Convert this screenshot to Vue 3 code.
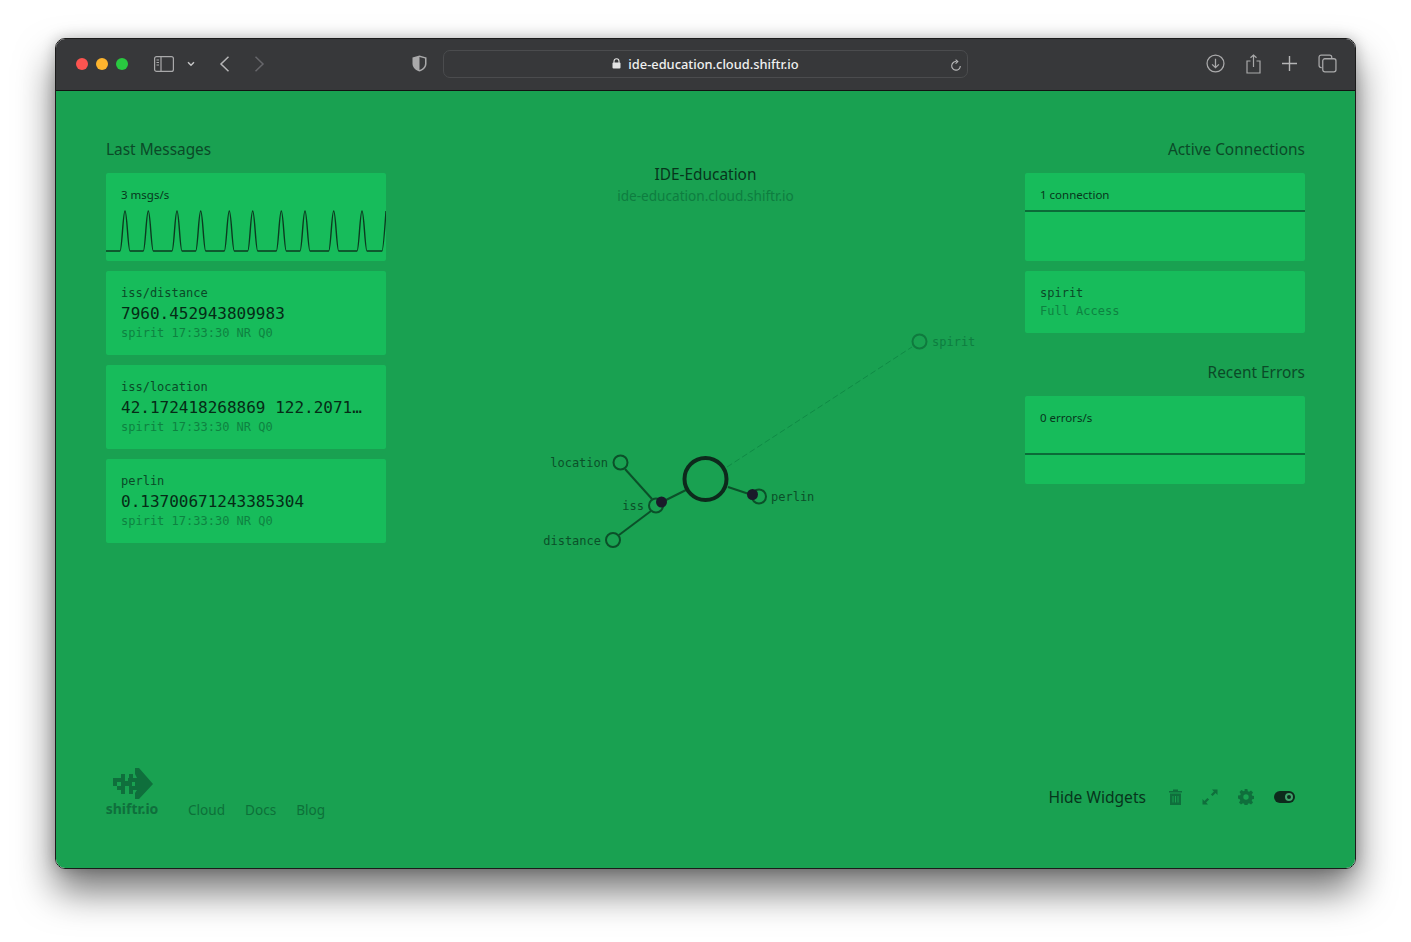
<script setup>
import { computed } from 'vue'

const messages = [
  { topic: 'iss/distance', value: '7960.452943809983', meta: 'spirit 17:33:30 NR Q0' },
  { topic: 'iss/location', value: '42.172418268869 122.2071…', meta: 'spirit 17:33:30 NR Q0' },
  { topic: 'perlin', value: '0.13700671243385304', meta: 'spirit 17:33:30 NR Q0' },
]

const peaks = [19, 42.3, 71, 94.7, 123.3, 146.7, 175.3, 199, 227.7, 256]

// spark line for the msgs/s card
const sparkPath = computed(() => {
  let d = 'M0 38'
  for (const x of peaks) {
    d += ` L${x - 5} 38 C${x - 3} 38 ${x - 2} -2 ${x} -2 C${x + 2} -2 ${x + 3} 38 ${x + 5} 38`
  }
  d += ' L276 38 C277 38 278.5 20 280 -2'
  return d
})
</script>

<template>
  <main class="page">
    <div class="window">
      <header class="toolbar">
        <div class="lights">
          <span class="light red"></span>
          <span class="light yellow"></span>
          <span class="light green"></span>
        </div>
        <svg class="tb-icon sidebar" width="20" height="16" viewBox="0 0 20 16" fill="none" stroke="#a9a9aa" stroke-width="1.2">
          <rect x="0.6" y="0.6" width="18.8" height="14.8" rx="2" />
          <path d="M7 1v14M2.5 4h2.5M2.5 6.5h2.5M2.5 9h2.5" />
        </svg>
        <svg class="tb-icon chevron" width="8" height="6" viewBox="0 0 8 6" fill="none" stroke="#c4c4c5" stroke-width="1.5">
          <path d="M1 1.2l3 3 3-3" />
        </svg>
        <svg class="tb-icon back" width="11" height="16" viewBox="0 0 11 16" fill="none" stroke="#b5b5b6" stroke-width="1.5">
          <path d="M9.5 0.8L2 8l7.5 7.2" />
        </svg>
        <svg class="tb-icon forward" width="11" height="16" viewBox="0 0 11 16" fill="none" stroke="#66666a" stroke-width="1.5">
          <path d="M1.5 0.8L9 8l-7.5 7.2" />
        </svg>
        <svg class="tb-icon shield" width="15" height="17" viewBox="0 0 15 17">
          <path d="M7.5 0.5L14.5 2.5V8.5C14.5 12.5 11.5 15.2 7.5 16.5C3.5 15.2 0.5 12.5 0.5 8.5V2.5Z" fill="#a9a9aa" />
          <path d="M7.5 2L13 3.5V8.5C13 11.7 10.7 14 7.5 15Z" fill="#38393b" />
        </svg>
        <div class="urlbar">
          <svg class="lock" width="9" height="11" viewBox="0 0 9 11">
            <path d="M2 5V3.2a2.5 2.5 0 0 1 5 0V5" fill="none" stroke="#e4e4e4" stroke-width="1.1" />
            <rect x="0.5" y="4.6" width="8" height="6" rx="1" fill="#e4e4e4" />
          </svg>
          <span class="url">ide-education.cloud.shiftr.io</span>
          <svg class="reload" width="12" height="13" viewBox="0 0 12 13" fill="none" stroke="#b9b9ba" stroke-width="1.1">
            <path d="M6.5 2.6A4.3 4.3 0 1 0 10.3 7" />
            <path d="M5.6 0.6l2.2 2-2.2 2" />
          </svg>
        </div>
        <div class="tb-right">
          <svg width="19" height="19" viewBox="0 0 18 18" fill="none" stroke="#a9a9aa" stroke-width="1.2">
            <circle cx="9" cy="9" r="8" />
            <path d="M9 4.5v8.5M5.8 9.8L9 13l3.2-3.2" />
          </svg>
          <svg width="15" height="20" viewBox="0 0 15 20" fill="none" stroke="#a9a9aa" stroke-width="1.2">
            <path d="M4.5 7H1v12h13V7h-3.5M7.5 13V1M4.5 3.8L7.5 1l3 2.8" />
          </svg>
          <svg width="15" height="15" viewBox="0 0 14 14" fill="none" stroke="#b5b5b6" stroke-width="1.3">
            <path d="M7 0v14M0 7h14" />
          </svg>
          <svg width="19" height="19" viewBox="0 0 18 18" fill="none" stroke="#a9a9aa" stroke-width="1.2">
            <path d="M3.5 13H3a2 2 0 0 1-2-2V3a2 2 0 0 1 2-2h8a2 2 0 0 1 2 2v.8" />
            <rect x="4.5" y="4.5" width="12.5" height="12.5" rx="2" />
          </svg>
        </div>
      </header>

      <section class="content">
        <div class="columns">
          <aside class="col">
            <h2 class="col-title">Last Messages</h2>
            <div class="card rate-card">
              <p class="rate">3 msgs/s</p>
              <svg class="spark" width="280" height="42" viewBox="0 -3 280 42" fill="none" stroke="#0c3a20" stroke-width="1.4">
                <path :d="sparkPath" />
              </svg>
            </div>
            <div v-for="m in messages" :key="m.topic" class="card message">
              <p class="mono topic">{{ m.topic }}</p>
              <p class="mono value">{{ m.value }}</p>
              <p class="mono meta">{{ m.meta }}</p>
            </div>
          </aside>

          <div class="center">
            <h1 class="instance">IDE-Education</h1>
            <p class="host">ide-education.cloud.shiftr.io</p>
            <svg class="graph" viewBox="386 139 639 600" width="639" height="600">
              <line x1="727" y1="467" x2="912" y2="347" class="link-faint" />
              <line x1="625" y1="469" x2="652" y2="499" class="link" />
              <line x1="651" y1="511" x2="619" y2="535" class="link" />
              <line x1="662" y1="502" x2="686" y2="490" class="link" />
              <line x1="728" y1="487" x2="752" y2="495" class="link" />
              <circle cx="919.5" cy="341.5" r="7" class="node-faint" />
              <circle cx="620.5" cy="462.5" r="7" class="node" />
              <circle cx="656" cy="505.5" r="7" class="node" />
              <circle cx="613" cy="540" r="7" class="node" />
              <circle cx="759" cy="496.5" r="7" class="node" />
              <circle cx="705.5" cy="479" r="21" class="broker" />
              <circle cx="661.5" cy="502" r="5.5" class="dot" />
              <circle cx="752.5" cy="494.5" r="5.5" class="dot" />
              <text x="932" y="345.5" class="label faint">spirit</text>
              <text x="608" y="466.5" class="label" text-anchor="end">location</text>
              <text x="644" y="509.5" class="label" text-anchor="end">iss</text>
              <text x="601" y="544.5" class="label" text-anchor="end">distance</text>
              <text x="771" y="500.5" class="label">perlin</text>
            </svg>
          </div>

          <aside class="col right">
            <h2 class="col-title">Active Connections</h2>
            <div class="card split-card">
              <p class="rate">1 connection</p>
              <div class="split conn-split"></div>
            </div>
            <div class="card client">
              <p class="mono topic">spirit</p>
              <p class="mono access">Full Access</p>
            </div>
            <h2 class="col-title errors-title">Recent Errors</h2>
            <div class="card split-card">
              <p class="rate">0 errors/s</p>
              <div class="split err-split"></div>
            </div>
          </aside>
        </div>

        <footer class="footer">
          <div class="brand">
            <svg class="logo" width="40" height="32" viewBox="0 0 40 32" fill="#0f6f3c">
              <path d="M22 0h4l14 16-14 15h-4v-6l2-3V10l-2-4Z" />
              <path d="M8 6h4v4h4V6h4v4h4v12h-4v4h-4v-4h-4v4H8v-4H4v-4H0v-8h4v-0h4Z" />
              <g fill="#19a151">
                <rect x="4" y="14" width="4" height="4" />
                <rect x="12" y="10" width="3" height="3" />
                <rect x="12" y="18" width="4" height="4" />
                <rect x="19" y="14" width="3" height="4" />
              </g>
            </svg>
            <span class="brand-name">shiftr.io</span>
          </div>
          <nav class="links">
            <a>Cloud</a>
            <a>Docs</a>
            <a>Blog</a>
          </nav>
          <div class="actions">
            <span class="hide">Hide Widgets</span>
            <svg width="13" height="16" viewBox="0 0 13 16" fill="#0f6f3c">
              <path d="M0 2h4V0.5h5V2h4v1.6H0ZM1 4.6h11V16H1Z" />
              <path d="M4 7v6.5M6.5 7v6.5M9 7v6.5" stroke="#19a151" stroke-width="1" />
            </svg>
            <svg width="16" height="16" viewBox="0 0 16 16" fill="#0f6f3c">
              <path d="M10 0.5h5.5V6l-1.9-1.9-3 3-1.7-1.7 3-3ZM6 15.5H0.5V10l1.9 1.9 3-3 1.7 1.7-3 3Z" />
            </svg>
            <svg width="16" height="16" viewBox="0 0 16 16" fill="#0f6f3c">
              <path fill-rule="evenodd" d="M6.6 0h2.8l.4 2.2 1.3.6 1.9-1.3 2 2-1.3 1.9.6 1.3 2.2.4v2.8l-2.2.4-.6 1.3 1.3 1.9-2 2-1.9-1.3-1.3.6-.4 2.2H6.6l-.4-2.2-1.3-.6-1.9 1.3-2-2 1.3-1.9-.6-1.3L0 9.4V6.6l2.2-.4.6-1.3-1.3-1.9 2-2 1.9 1.3 1.3-.6ZM8 5.3a2.7 2.7 0 1 0 0 5.4 2.7 2.7 0 0 0 0-5.4Z" />
            </svg>
            <span class="toggle"><span class="knob"></span></span>
          </div>
        </footer>
      </section>
    </div>
  </main>
</template>

<style>
html, body {
  background: #fff;
}
</style>

<style scoped>
.page {
  width: 1411px;
  height: 942px;
  padding: 38px 55px 0;
  box-sizing: border-box;
  overflow: hidden;
  font-family: "Noto Sans", "Open Sans", sans-serif;
}

.window {
  width: 1301px;
  height: 831px;
  border: 1px solid #1b1b1b;
  border-radius: 10px;
  box-sizing: border-box;
  overflow: hidden;
  display: flex;
  flex-direction: column;
  box-shadow: 0 22px 38px rgba(0, 0, 0, 0.55), 0 0 14px rgba(0, 0, 0, 0.22);
}

.toolbar {
  height: 52px;
  flex: none;
  background: #37383a;
  border-bottom: 1px solid #121212;
  box-sizing: border-box;
  display: flex;
  align-items: center;
  padding: 0 0 2px 20px;
  color: #eee;
}

.lights {
  display: flex;
  gap: 8px;
}

.light {
  width: 12px;
  height: 12px;
  border-radius: 50%;
}

.red { background: #fc5450; }
.yellow { background: #fdb42e; }
.green { background: #29c840; }

.tb-icon { flex: none; }
.sidebar { margin-left: 26px; }
.chevron { margin-left: 13px; }
.back { margin-left: 24px; }
.forward { margin-left: 24px; }
.shield { margin-left: 147px; }

.urlbar {
  width: 525px;
  height: 28px;
  margin-left: 16px;
  border: 1px solid #4b4c4e;
  border-radius: 7px;
  box-sizing: border-box;
  position: relative;
  display: flex;
  align-items: center;
  justify-content: center;
  gap: 7px;
  font-size: 12.85px;
  font-weight: 500;
  color: #f0f0f0;
}

.reload {
  position: absolute;
  right: 5px;
  top: 8px;
}

.tb-right {
  display: flex;
  align-items: center;
  margin-left: 238px;
  gap: 21px;
}

.content {
  flex: 1;
  background: #19a151;
  padding: 48px 50px 0;
  display: flex;
  flex-direction: column;
}

.columns {
  flex: 1;
  display: flex;
  justify-content: space-between;
}

.col {
  width: 280px;
  display: flex;
  flex-direction: column;
  gap: 10px;
}

.col-title {
  margin: 0 0 2px;
  height: 22px;
  line-height: 22px;
  font-size: 15.4px;
  font-weight: 400;
  color: #0b4a28;
}

.right .col-title { text-align: right; }

.errors-title {
  margin-top: 19px;
}

.card {
  background: #17bc5b;
  border-radius: 2px;
  padding: 0 15px;
  box-sizing: border-box;
  position: relative;
}

p { margin: 0; }

.rate {
  padding-top: 13px;
  font-size: 11.5px;
  line-height: 17px;
  color: #07351c;
}

.rate-card {
  height: 88px;
}

.spark {
  position: absolute;
  left: 0;
  bottom: 9px;
}

.mono {
  font-family: "DejaVu Sans Mono", monospace;
  white-space: nowrap;
}

.message {
  height: 84px;
  padding-top: 13px;
}

.topic {
  font-size: 12px;
  line-height: 18px;
  color: #0a4a28;
}

.value {
  margin-top: 1px;
  font-size: 16px;
  line-height: 21px;
  color: #052b16;
}

.meta, .access {
  font-size: 12px;
  line-height: 18px;
  color: #0e8241;
}

.split-card {
  height: 88px;
}

.split {
  position: absolute;
  left: 0;
  right: 0;
  height: 2px;
  background: #0b6b38;
}

.conn-split { top: 37px; }
.err-split { top: 57px; }

.client {
  height: 62px;
  padding-top: 13px;
}

.center {
  flex: 1;
  text-align: center;
  padding-top: 25px;
  position: relative;
}

.instance {
  margin: 0;
  font-size: 15.4px;
  font-weight: 400;
  line-height: 21px;
  color: #07351c;
}

.host {
  font-size: 13.6px;
  line-height: 22px;
  color: #0e7d40;
}

.graph {
  position: absolute;
  left: 0;
  top: 0;
}

.link { stroke: #0b5029; stroke-width: 2; }
.link-faint { stroke: #0f8a45; stroke-width: 1; stroke-dasharray: 6 3; }
.node { fill: none; stroke: #0b5029; stroke-width: 2; }
.node-faint { fill: none; stroke: #0f7a3e; stroke-width: 2; }
.broker { fill: none; stroke: #0d2a1c; stroke-width: 4; }
.dot { fill: #1a1a2a; }

.label {
  font-family: "DejaVu Sans Mono", monospace;
  font-size: 12px;
  fill: #0b5029;
}

.label.faint { fill: #0e7d40; }

.footer {
  height: 72px;
  margin-bottom: 49px;
  display: flex;
  align-items: flex-end;
}

.brand {
  display: flex;
  flex-direction: column;
  align-items: center;
  width: 52px;
  padding-bottom: 1px;
}

.logo { margin-left: 2px; }

.brand-name {
  font-size: 14px;
  font-weight: 700;
  line-height: 18px;
  color: #0f6f3c;
}

.links {
  margin-left: 30px;
  display: flex;
  gap: 20px;
  font-size: 13.6px;
  line-height: 18px;
  color: #0d7039;
}

.actions {
  margin-left: auto;
  display: flex;
  align-items: center;
  height: 18px;
  margin-bottom: 13px;
  padding-right: 10px;
  gap: 20px;
}

.hide {
  font-size: 15.6px;
  line-height: 18px;
  color: #07351c;
  margin-right: 3px;
}

.toggle {
  width: 21px;
  height: 12px;
  border-radius: 6px;
  background: #0d2a1c;
  position: relative;
}

.knob {
  position: absolute;
  right: 2px;
  top: 2px;
  width: 8px;
  height: 8px;
  box-sizing: border-box;
  border: 2px solid #3fa26a;
  border-radius: 50%;
}
</style>
